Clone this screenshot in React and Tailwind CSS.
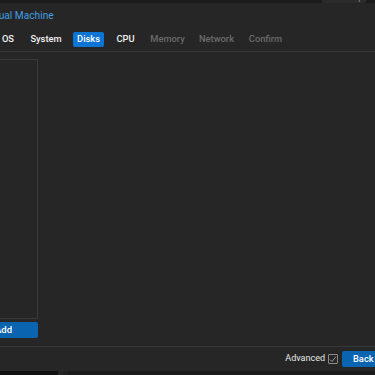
import React from 'react';

const tabs = [
  { label: 'General', w: 'w-[50px]', state: 'done' },
  { label: 'OS', w: 'w-[22px]', state: 'done' },
  { label: 'System', w: 'w-[40px]', state: 'done' },
  { label: 'Disks', w: 'w-[31px]', state: 'active' },
  { label: 'CPU', w: 'w-[29px]', state: 'done' },
  { label: 'Memory', w: 'w-[41px]', state: 'off' },
  { label: 'Network', w: 'w-[43px]', state: 'off' },
  { label: 'Confirm', w: 'w-[41px]', state: 'off' },
];

export default function App() {
  return (
    <div
      className="w-[375px] h-[375px] overflow-hidden flex flex-col bg-[#171717]"
      style={{ fontFamily: 'Roboto, "Liberation Sans", Arial, sans-serif' }}
    >
      {/* top bar behind the dialog */}
      <div className="h-[3px] flex justify-end pr-[9px] bg-[#1b1b1b] shrink-0">
        <div className="w-[44px] h-[3px] overflow-hidden bg-[#2b2b2b] rounded-b-[2px]">
          <div className="-mt-[8px] pl-[6px] text-[9px] leading-[10px] text-[#8a8a8a]">▪ Backup</div>
        </div>
      </div>

      {/* dialog */}
      <div className="flex-1 flex flex-col bg-[#262626] min-h-0">
        {/* title */}
        <div className="h-[25px] flex items-center shrink-0">
          <span className="-ml-[52px] text-[10.2px] text-[#3f9fe2] whitespace-nowrap">Create: Virtual Machine</span>
        </div>

        {/* tabs */}
        <div className="h-[22px] flex items-center gap-[7px] -ml-[60px] shrink-0">
          {tabs.map((t) => (
            <div
              key={t.label}
              className={`${t.w} h-[15px] shrink-0 flex items-center justify-center rounded-[2px] text-[9.3px] font-medium whitespace-nowrap ${
                t.state === 'active'
                  ? 'bg-[#0b74d4] text-white'
                  : t.state === 'done'
                  ? 'text-[#f2f2f2]'
                  : 'text-[#6b6b6b]'
              }`}
            >
              {t.label}
            </div>
          ))}
        </div>

        <div className="mt-[1px] h-px bg-[#363636] shrink-0" />

        {/* body */}
        <div className="flex-1 flex flex-col pt-[7px] pb-[8px] min-h-0">
          <div className="w-[38px] flex-1 border border-l-0 border-[#3a3a3a]" />
          <div className="mt-[3px] w-[38px] h-[16px] bg-[#0a64b0] rounded-r-[2px] overflow-hidden flex items-center justify-end pr-[26px]">
            <span className="text-[9.5px] font-medium text-white whitespace-nowrap">Add</span>
          </div>
        </div>

        <div className="h-px bg-[#363636] shrink-0" />

        {/* footer */}
        <div className="h-[24px] flex items-center justify-end shrink-0">
          <span className="text-[9px] text-[#e6e6e6] mr-[3px]">Advanced</span>
          <div className="w-[10px] h-[10px] border border-[#8a8a8a] rounded-[1px] flex items-center justify-center mr-[4px]">
            <svg width="8" height="8" viewBox="0 0 8 8">
              <path d="M1 4.5 L3 6.5 L7 1.5" stroke="#9a9a9a" strokeWidth="1" fill="none" />
            </svg>
          </div>
          <div className="w-[33px] h-[16px] bg-[#0a64b0] rounded-l-[2px] flex items-center pl-[11px]">
            <span className="text-[9.3px] font-medium text-white">Back</span>
          </div>
        </div>
      </div>

      {/* page behind, bottom */}
      <div className="h-[4px] flex shrink-0">
        <div className="w-[58px] bg-[#111111]" />
        <div className="w-[5px] bg-[#242424]" />
        <div className="w-[5px] bg-[#1e1e1e]" />
        <div className="flex-1 bg-[#1a1a1a]" />
      </div>
    </div>
  );
}
